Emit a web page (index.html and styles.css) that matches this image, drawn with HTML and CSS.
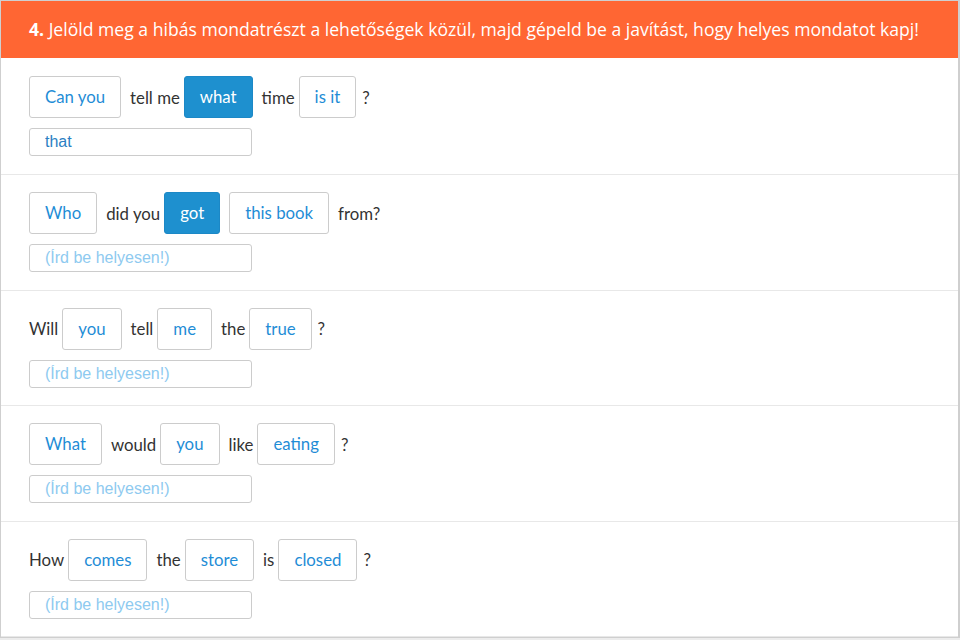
FILE: index.html
```html
<!DOCTYPE html>
<html lang="hu">
<head>
    <meta charset="UTF-8">
    <meta name="viewport" content="width=device-width, initial-scale=1.0">
    <title>Feladat 4</title>
    <link rel="stylesheet" href="styles.css">
</head>
<body>
    <div class="task">
        <div class="task-title"><strong>4.</strong> Jelöld meg a hibás mondatrészt a lehetőségek közül, majd gépeld be a javítást, hogy helyes mondatot kapj!</div>

        <!-- 1. mondat -->
        <div class="sentence first">
            <div class="parts">
                <span class="chip">Can you</span>
                <span class="word">tell me</span>
                <span class="chip selected">what</span>
                <span class="word">time</span>
                <span class="chip">is it</span>
                <span class="word punct">?</span>
            </div>
            <input class="fix" type="text" value="that" placeholder="(Írd be helyesen!)">
        </div>

        <!-- 2. mondat -->
        <div class="sentence">
            <div class="parts">
                <span class="chip">Who</span>
                <span class="word">did you</span>
                <span class="chip selected">got</span>
                <span class="chip">this book</span>
                <span class="word">from?</span>
            </div>
            <input class="fix" type="text" placeholder="(Írd be helyesen!)">
        </div>

        <!-- 3. mondat -->
        <div class="sentence">
            <div class="parts">
                <span class="word">Will</span>
                <span class="chip">you</span>
                <span class="word">tell</span>
                <span class="chip">me</span>
                <span class="word">the</span>
                <span class="chip">true</span>
                <span class="word punct">?</span>
            </div>
            <input class="fix" type="text" placeholder="(Írd be helyesen!)">
        </div>

        <!-- 4. mondat -->
        <div class="sentence">
            <div class="parts">
                <span class="chip">What</span>
                <span class="word">would</span>
                <span class="chip">you</span>
                <span class="word">like</span>
                <span class="chip">eating</span>
                <span class="word punct">?</span>
            </div>
            <input class="fix" type="text" placeholder="(Írd be helyesen!)">
        </div>

        <!-- 5. mondat -->
        <div class="sentence">
            <div class="parts">
                <span class="word">How</span>
                <span class="chip">comes</span>
                <span class="word">the</span>
                <span class="chip">store</span>
                <span class="word">is</span>
                <span class="chip">closed</span>
                <span class="word punct">?</span>
            </div>
            <input class="fix" type="text" placeholder="(Írd be helyesen!)">
        </div>
    </div>
</body>
</html>
```

FILE: styles.css
```css
body {
    margin: 0;
    background-color: #ececec;
    font-family: 'Lato', 'Open Sans', sans-serif;
    color: #333;
}

/* Feladat doboz */
.task {
    width: 960px;
    box-sizing: border-box;
    background: #fff;
    border: 1px solid #cfcfcf;
    border-right-width: 2px;
}

.task-title {
    background-color: #ff6633;
    color: #fff;
    font-family: 'Open Sans', sans-serif;
    font-size: 17.6px;
    height: 57px;
    line-height: 57px;
    padding-left: 28px;
    white-space: nowrap;
}

.task-title strong {
    font-weight: 700;
}

/* Egy mondat sora */
.sentence {
    padding: 17.25px 28px;
    border-bottom: 1px solid #e8e8e8;
}

.sentence.first {
    padding-top: 18px;
    padding-bottom: 18px;
}

.parts {
    display: flex;
    align-items: center;
    font-size: 16.8px;
}

.chip {
    display: inline-block;
    height: 40px;
    line-height: 40px;
    padding: 0 15px;
    border: 1px solid #cccccc;
    border-radius: 3px;
    color: #1f8dd6;
    margin-right: 9px;
    cursor: pointer;
}

.chip.selected {
    background-color: #1e90cf;
    border-color: #1c88c6;
    color: #fff;
}

.word {
    margin-right: 4px;
}

/* kérdőjel közvetlenül a doboz után */
.punct {
    margin-left: -3px;
}

/* Javítás mező */
.fix {
    display: block;
    width: 223px;
    height: 28px;
    box-sizing: border-box;
    margin-top: 10px;
    padding: 0 15px;
    border: 1px solid #cccccc;
    border-radius: 3px;
    font-family: 'Liberation Sans', Arial, sans-serif;
    font-size: 16px;
    color: #2b7fc3;
    outline: none;
}

.fix::placeholder {
    color: #8ecaf0;
}
```
